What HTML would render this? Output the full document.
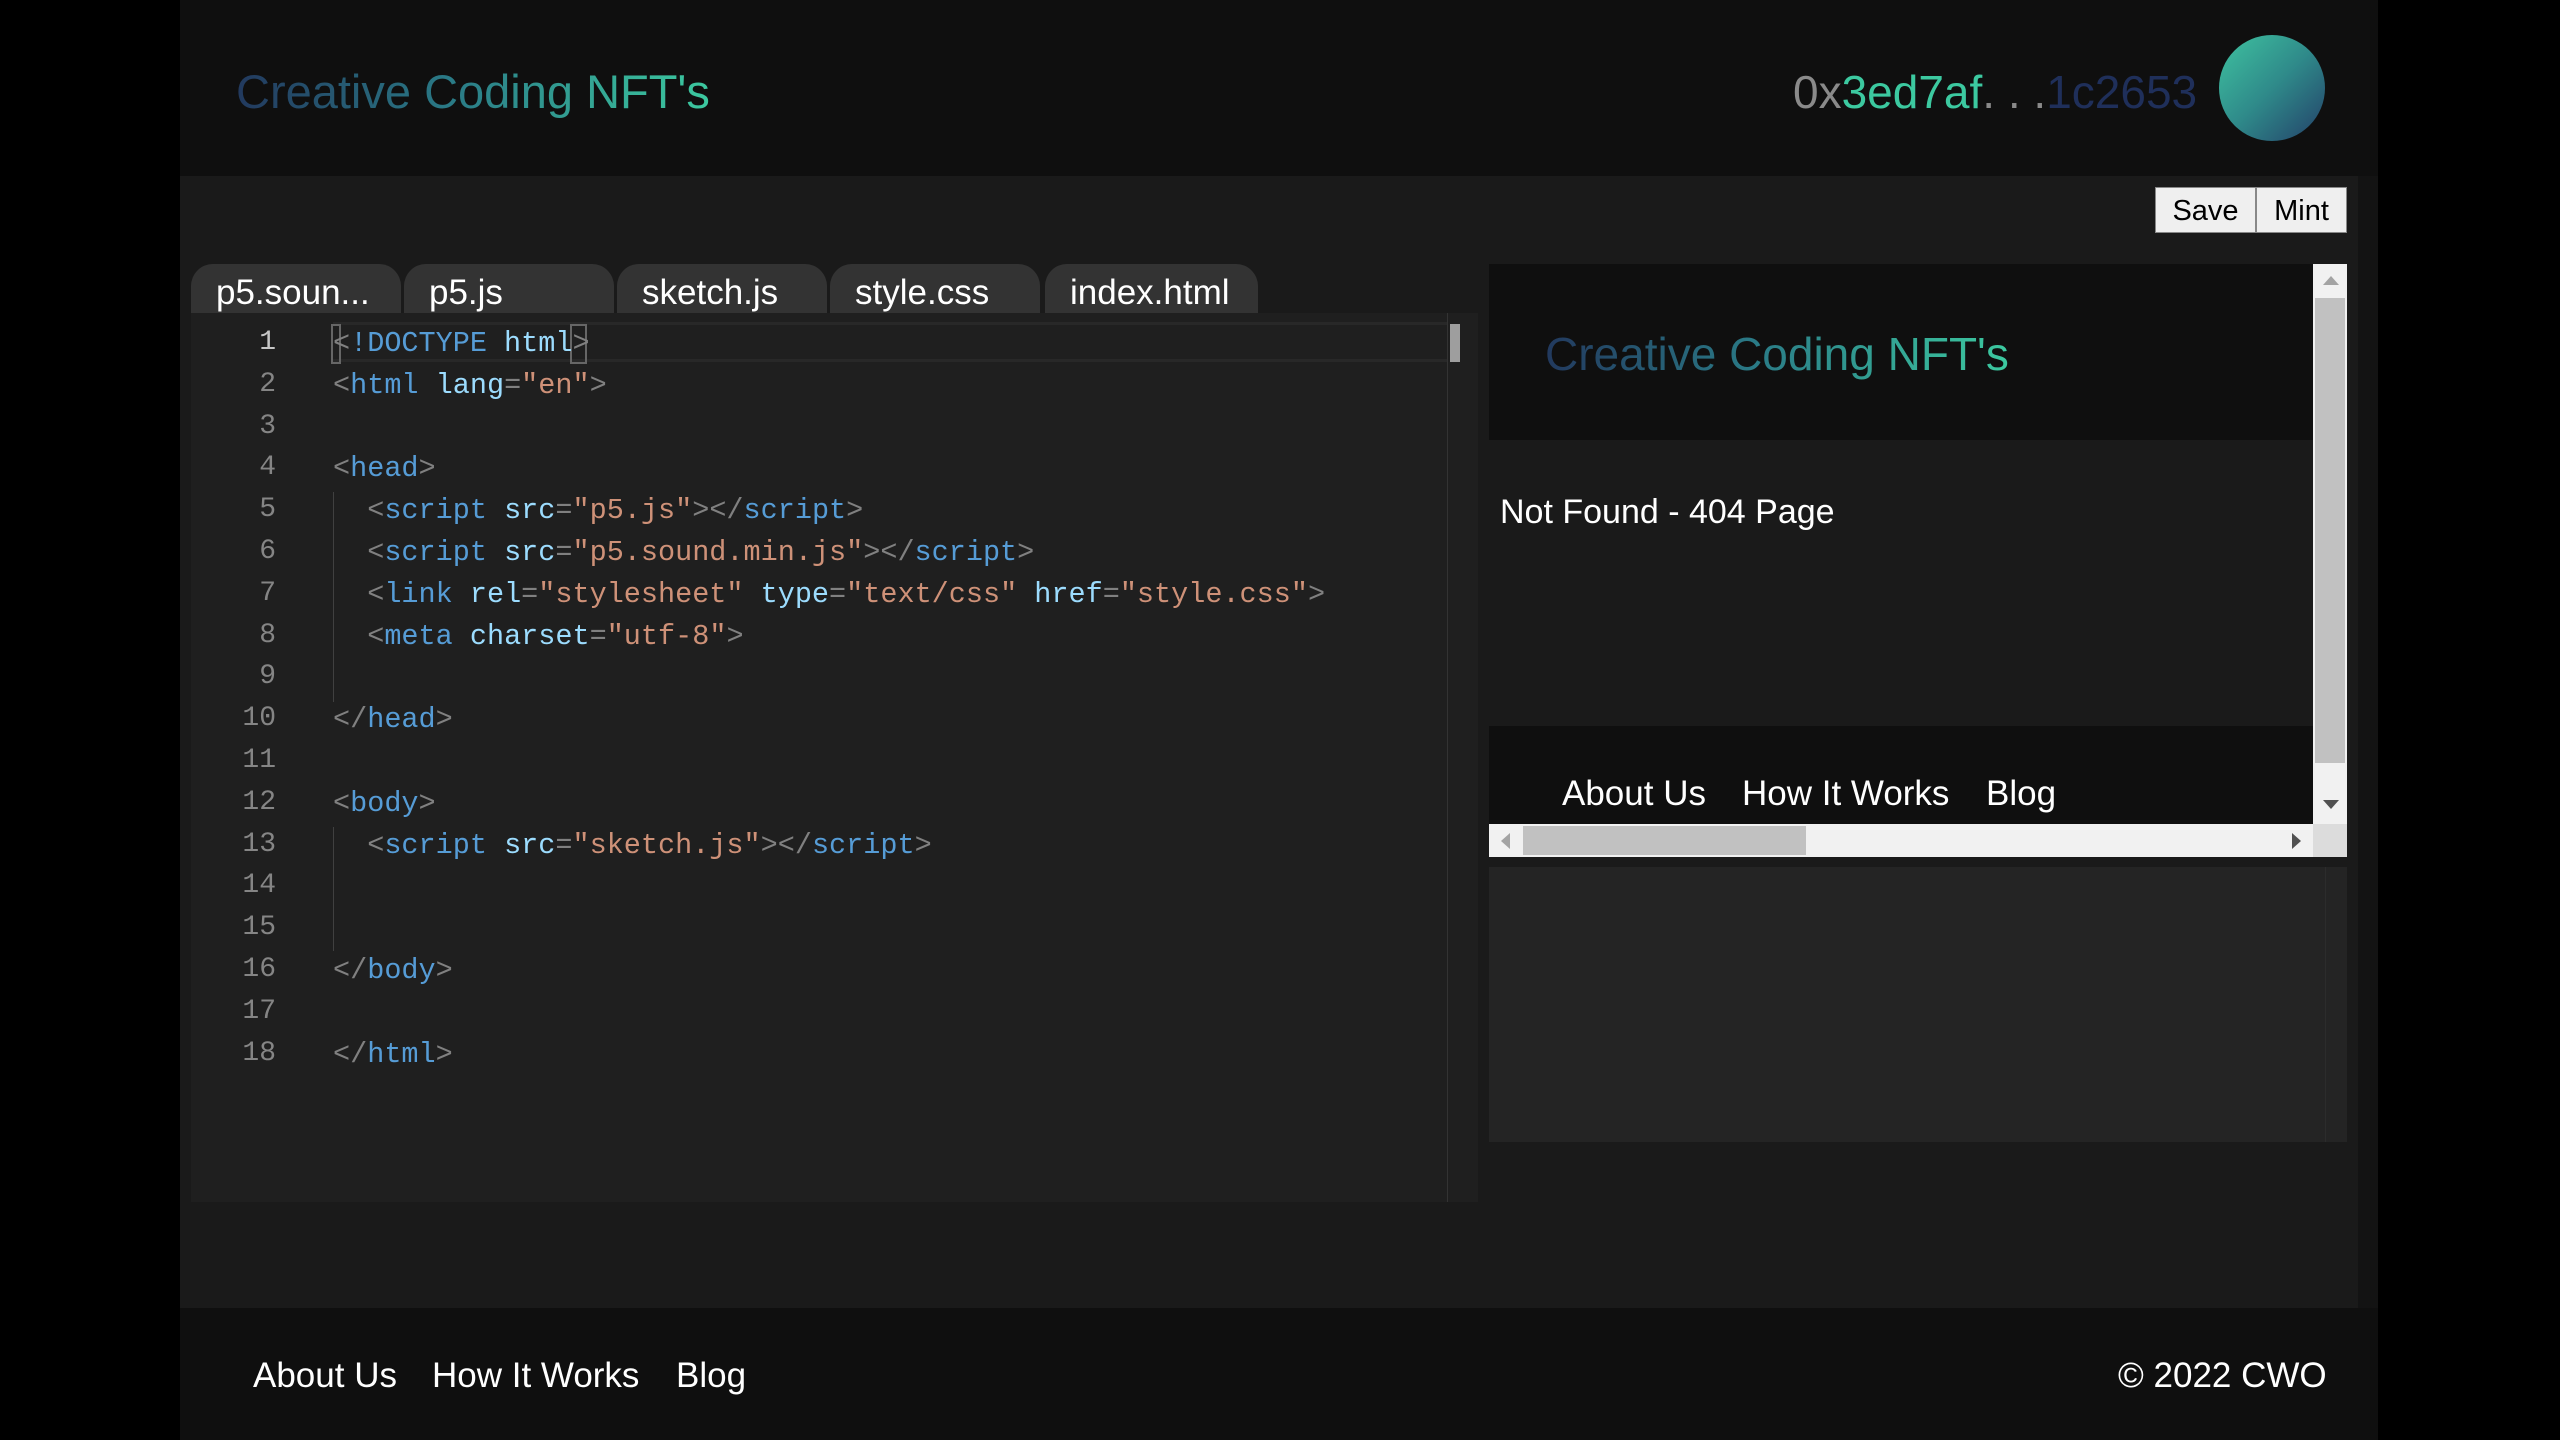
<!DOCTYPE html>
<html><head><meta charset="utf-8"><style>
*{margin:0;padding:0;box-sizing:border-box}
body{width:2560px;height:1440px;background:#000;position:relative;overflow:hidden;font-family:"Liberation Sans",sans-serif;color:#fff}
.a{position:absolute}
.grad{background:linear-gradient(90deg,#22395e,#2a7a86 45%,#3cc9a0);-webkit-background-clip:text;background-clip:text;color:transparent;white-space:nowrap}
.tab{position:absolute;top:264px;width:210px;height:49px;background:#333;border-radius:22px 22px 0 0;font-size:35px;line-height:58px;padding-left:25px;color:#fff}
.code{position:absolute;left:333px;font-family:"Liberation Mono",monospace;font-size:28.5px;white-space:pre;color:#d4d4d4;margin-top:5px}
.ln{position:absolute;left:200px;width:76px;text-align:right;font-family:"Liberation Mono",monospace;font-size:28px;color:#858585;margin-top:5px}
.p{color:#808080}.t{color:#569cd6}.at{color:#9cdcfe}.s{color:#ce9178}
.nav{position:absolute;font-size:35px;color:#fff;white-space:nowrap}
</style></head><body>
<div class="a" style="left:180px;top:0;width:2198px;height:176px;background:#0f0f0f"></div>
<div class="a" style="left:180px;top:176px;width:2178px;height:1132px;background:#1a1a1a"></div>
<div class="a" style="left:2358px;top:176px;width:20px;height:1132px;background:#131313"></div>
<div class="a" style="left:180px;top:1308px;width:2198px;height:132px;background:#0f0f0f"></div>

<div class="a grad" style="left:236px;top:62px;font-size:47px;line-height:60px">Creative Coding NFT's</div>
<div class="a" style="left:1793px;top:62px;font-size:46px;line-height:60px;white-space:nowrap"><span style="color:#8a8a8a">0x</span><span style="color:#3cc9a0">3ed7af</span><span style="color:#8a8a8a">. . .</span><span style="color:#1f2f5a">1c2653</span></div>
<div class="a" style="left:2219px;top:35px;width:106px;height:106px;border-radius:50%;background:linear-gradient(135deg,#3fc3a0,#2f8a8a 50%,#233f68)"></div>

<div class="a" style="left:2155px;top:187px;width:101px;height:46px;background:#efefef;border:1px solid #888;color:#000;font-size:29px;line-height:46px;text-align:center">Save</div>
<div class="a" style="left:2256px;top:187px;width:91px;height:46px;background:#efefef;border:1px solid #888;color:#000;font-size:29px;line-height:46px;text-align:center">Mint</div>

<div class="tab" style="left:191px">p5.soun...</div>
<div class="tab" style="left:404px">p5.js</div>
<div class="tab" style="left:617px">sketch.js</div>
<div class="tab" style="left:830px">style.css</div>
<div class="tab" style="left:1045px;width:213px">index.html</div>

<div class="a" style="left:191px;top:313px;width:1287px;height:889px;background:#1f1f1f"></div>
<div class="a" style="left:333px;top:322px;width:1145px;height:40px;border-top:3px solid #282828;border-bottom:3px solid #282828"></div>
<div class="a" style="left:1447px;top:313px;width:1px;height:889px;background:#333"></div>
<div class="a" style="left:1448px;top:322px;width:30px;height:40px;background:#1f1f1f"></div>
<div class="a" style="left:1450px;top:324px;width:10px;height:38px;background:#9e9e9e"></div>
<div class="a" style="left:333px;top:492px;width:1px;height:210px;background:#404040"></div>
<div class="a" style="left:333px;top:827px;width:1px;height:124px;background:#404040"></div>
<div class="a" style="left:331px;top:324px;width:10px;height:40px;border:2px solid #666"></div>
<div class="a" style="left:570px;top:324px;width:17px;height:40px;border:2px solid #666"></div>

<div class="ln" style="top:322px;color:#c6c6c6">1</div>
<div class="ln" style="top:364px">2</div>
<div class="ln" style="top:406px">3</div>
<div class="ln" style="top:447px">4</div>
<div class="ln" style="top:489px">5</div>
<div class="ln" style="top:531px">6</div>
<div class="ln" style="top:573px">7</div>
<div class="ln" style="top:615px">8</div>
<div class="ln" style="top:656px">9</div>
<div class="ln" style="top:698px">10</div>
<div class="ln" style="top:740px">11</div>
<div class="ln" style="top:782px">12</div>
<div class="ln" style="top:824px">13</div>
<div class="ln" style="top:865px">14</div>
<div class="ln" style="top:907px">15</div>
<div class="ln" style="top:949px">16</div>
<div class="ln" style="top:991px">17</div>
<div class="ln" style="top:1033px">18</div>

<div class="code" style="top:322px"><span class="p">&lt;</span><span class="t">!DOCTYPE</span> <span class="at">html</span><span class="p">&gt;</span></div>
<div class="code" style="top:364px"><span class="p">&lt;</span><span class="t">html</span> <span class="at">lang</span><span class="p">=</span><span class="s">"en"</span><span class="p">&gt;</span></div>
<div class="code" style="top:447px"><span class="p">&lt;</span><span class="t">head</span><span class="p">&gt;</span></div>
<div class="code" style="top:489px">  <span class="p">&lt;</span><span class="t">script</span> <span class="at">src</span><span class="p">=</span><span class="s">"p5.js"</span><span class="p">&gt;&lt;/</span><span class="t">script</span><span class="p">&gt;</span></div>
<div class="code" style="top:531px">  <span class="p">&lt;</span><span class="t">script</span> <span class="at">src</span><span class="p">=</span><span class="s">"p5.sound.min.js"</span><span class="p">&gt;&lt;/</span><span class="t">script</span><span class="p">&gt;</span></div>
<div class="code" style="top:573px">  <span class="p">&lt;</span><span class="t">link</span> <span class="at">rel</span><span class="p">=</span><span class="s">"stylesheet"</span> <span class="at">type</span><span class="p">=</span><span class="s">"text/css"</span> <span class="at">href</span><span class="p">=</span><span class="s">"style.css"</span><span class="p">&gt;</span></div>
<div class="code" style="top:615px">  <span class="p">&lt;</span><span class="t">meta</span> <span class="at">charset</span><span class="p">=</span><span class="s">"utf-8"</span><span class="p">&gt;</span></div>
<div class="code" style="top:698px"><span class="p">&lt;/</span><span class="t">head</span><span class="p">&gt;</span></div>
<div class="code" style="top:782px"><span class="p">&lt;</span><span class="t">body</span><span class="p">&gt;</span></div>
<div class="code" style="top:824px">  <span class="p">&lt;</span><span class="t">script</span> <span class="at">src</span><span class="p">=</span><span class="s">"sketch.js"</span><span class="p">&gt;&lt;/</span><span class="t">script</span><span class="p">&gt;</span></div>
<div class="code" style="top:949px"><span class="p">&lt;/</span><span class="t">body</span><span class="p">&gt;</span></div>
<div class="code" style="top:1033px"><span class="p">&lt;/</span><span class="t">html</span><span class="p">&gt;</span></div>

<!-- preview -->
<div class="a" style="left:1489px;top:264px;width:824px;height:176px;background:#0f0f0f"></div>
<div class="a grad" style="left:1545px;top:326px;font-size:46px;line-height:56px">Creative Coding NFT's</div>
<div class="a" style="left:1489px;top:440px;width:824px;height:286px;background:#1a1a1a"></div>
<div class="a" style="left:1500px;top:490px;font-size:34px;line-height:44px;white-space:nowrap">Not Found - 404 Page</div>
<div class="a" style="left:1489px;top:726px;width:824px;height:98px;background:#0f0f0f"></div>
<div class="nav" style="left:1562px;top:774px">About Us</div>
<div class="nav" style="left:1742px;top:774px">How It Works</div>
<div class="nav" style="left:1986px;top:774px">Blog</div>
<div class="a" style="left:2313px;top:264px;width:34px;height:560px;background:#f1f1f1"></div>
<div class="a" style="left:2315px;top:298px;width:30px;height:465px;background:#c1c1c1"></div>
<div class="a" style="left:2323px;top:276px;width:0;height:0;border-left:8px solid transparent;border-right:8px solid transparent;border-bottom:9px solid #a3a3a3"></div>
<div class="a" style="left:2323px;top:800px;width:0;height:0;border-left:8px solid transparent;border-right:8px solid transparent;border-top:9px solid #505050"></div>
<div class="a" style="left:1489px;top:824px;width:824px;height:33px;background:#f1f1f1"></div>
<div class="a" style="left:1523px;top:826px;width:283px;height:29px;background:#c1c1c1"></div>
<div class="a" style="left:1501px;top:833px;width:0;height:0;border-top:8px solid transparent;border-bottom:8px solid transparent;border-right:9px solid #a3a3a3"></div>
<div class="a" style="left:2292px;top:833px;width:0;height:0;border-top:8px solid transparent;border-bottom:8px solid transparent;border-left:9px solid #505050"></div>
<div class="a" style="left:2313px;top:824px;width:34px;height:33px;background:#dcdcdc"></div>
<div class="a" style="left:1489px;top:867px;width:858px;height:275px;background:#242424"></div>
<div class="a" style="left:2325px;top:867px;width:1px;height:275px;background:#2c2c2c"></div>

<!-- footer -->
<div class="nav" style="left:253px;top:1356px">About Us</div>
<div class="nav" style="left:432px;top:1356px">How It Works</div>
<div class="nav" style="left:676px;top:1356px">Blog</div>
<div class="nav" style="left:2118px;top:1356px;width:207px;text-align:right">© 2022 CWO</div>
</body></html>
